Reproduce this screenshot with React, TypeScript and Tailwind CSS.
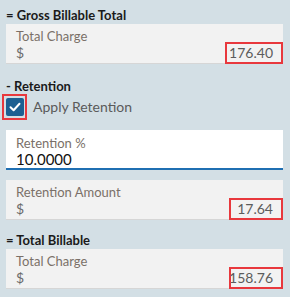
import React from 'react'

const font = { fontFamily: '"Source Sans Pro", Lato, "Noto Sans", sans-serif' }

const Heading: React.FC<{ text: string }> = ({ text }) => (
  <div className="h-[16px] text-[13px] leading-[16px] font-bold text-[#1a1a1a]">{text}</div>
)

const Amount: React.FC<{ label: string; value: string; boxW: string }> = ({ label, value, boxW }) => (
  <div className="relative h-[40px] bg-[#f2f2f2] border-b border-[#d6d6d6] pl-[10px] pt-[4px]">
    <div className="text-[13px] leading-[16px] text-[#7a7068]">{label}</div>
    <div className="text-[14px] leading-[18px] text-[#6a6a6a]">$</div>
    <div
      className={`absolute right-0 bottom-[-1px] h-[22px] ${boxW} border-2 border-[#e8383d] flex items-center justify-end pr-[8px] text-[14px] leading-[18px] text-[#5c5c5c]`}
    >
      {value}
    </div>
  </div>
)

export default function App() {
  return (
    <div className="w-[290px] h-[297px] bg-[#d3dfe5] overflow-hidden" style={font}>
      <div className="pl-[6px] pr-[7px] pt-[7px]">
        <Heading text="= Gross Billable Total" />
        <div className="mt-[1px]">
          <Amount label="Total Charge" value="176.40" boxW="w-[58px]" />
        </div>

        <div className="mt-[14px]">
          <Heading text="- Retention" />
        </div>
        <div className="flex items-center h-[26px] -ml-[4px]">
          <div className="w-[25px] h-[26px] border-2 border-[#e8383d] flex items-center justify-center">
            <div className="w-[18px] h-[18px] rounded-[2px] bg-[#1c5f91] flex items-center justify-center">
              <svg width="12" height="10" viewBox="0 0 12 10">
                <path d="M1.5 5.2 L4.6 8.2 L10.5 1.8" fill="none" stroke="#fff" strokeWidth="2" strokeLinecap="round" strokeLinejoin="round" />
              </svg>
            </div>
          </div>
          <span className="ml-[6px] text-[14px] leading-[18px] text-[#5a5a5a]">Apply Retention</span>
        </div>

        <div className="mt-[10px] h-[40px] bg-white border-b-2 border-[#1f6fb2] pl-[10px] pt-[5px]">
          <div className="text-[13px] leading-[16px] text-[#7a7068]">Retention %</div>
          <div className="text-[15px] leading-[16px] text-[#111]">10.0000</div>
        </div>

        <div className="mt-[10px]">
          <Amount label="Retention Amount" value="17.64" boxW="w-[54px]" />
        </div>

        <div className="mt-[12px]">
          <Heading text="= Total Billable" />
        </div>
        <div className="mt-[1px]">
          <Amount label="Total Charge" value="158.76" boxW="w-[54px]" />
        </div>
      </div>
    </div>
  )
}
